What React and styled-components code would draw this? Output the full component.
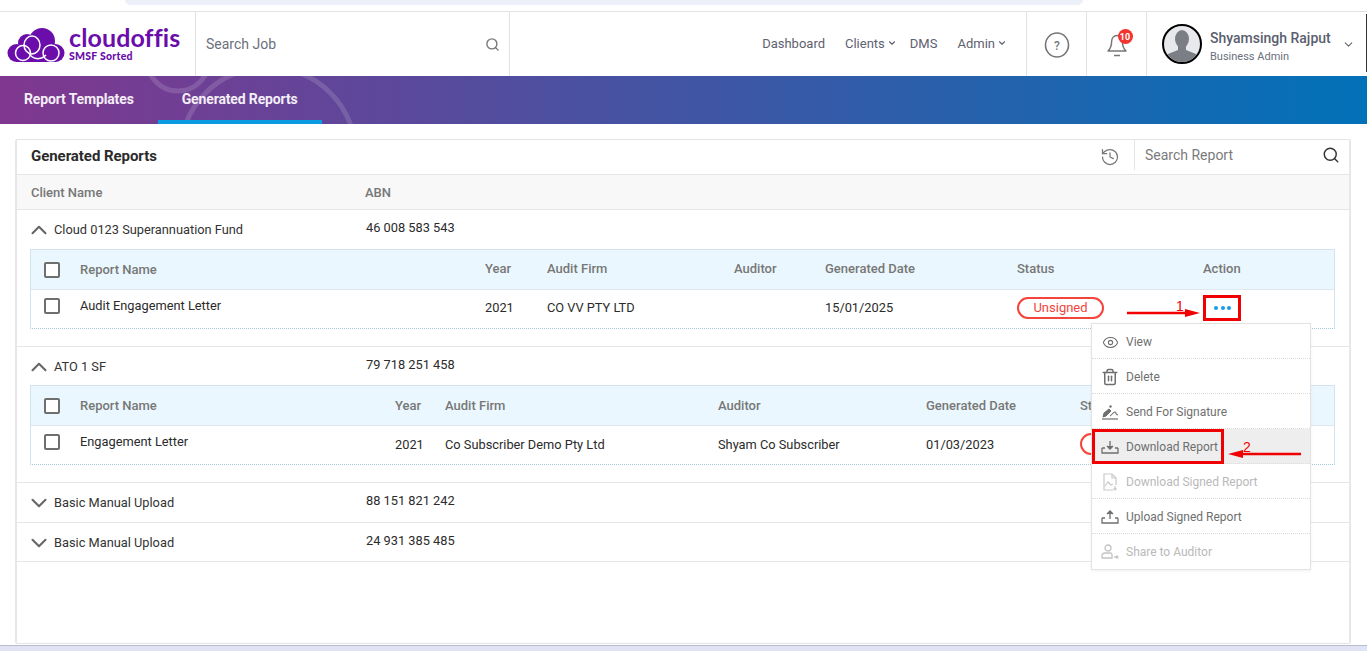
import React from "react";
import styled, { createGlobalStyle } from "styled-components";
import { Search, ChevronDown, ChevronUp, History, Eye, Trash2 } from "lucide-react";

const Global = createGlobalStyle`
  html, body { margin: 0; padding: 0; background: #fff; }
  body { font-family: Roboto, "Liberation Sans", sans-serif; font-size: 13px; color: #222; }
  * { box-sizing: border-box; }
`;

const Page = styled.div`
  position: relative;
  width: 1367px;
  height: 651px;
  overflow: hidden;
  display: flex;
  flex-direction: column;
  background: #fff;
`;
const BrowserStrip = styled.div`
  height: 12px;
  flex: none;
  padding: 0 284px 0 125px;
  border-bottom: 1px solid #e2e2e2;
`;
const BrowserPill = styled.div`
  height: 5px;
  background: #ebf0f9;
  border-radius: 0 0 10px 10px;
`;
const Header = styled.header`
  height: 64px;
  flex: none;
  display: flex;
  align-items: stretch;
  background: #fff;
`;
const LogoCell = styled.div`
  width: 196px;
  flex: none;
  border-right: 1px solid #e2e2e2;
  display: flex;
  align-items: center;
  gap: 4px;
  padding: 1px 0 0 7px;
`;
const LogoText = styled.div`
  display: flex;
  flex-direction: column;
  gap: 3px;
  color: #6a0dab;
  margin-top: -1px;
`;
const LogoName = styled.div`
  font-family: Lato, "Noto Sans", sans-serif;
  font-size: 25px;
  line-height: 21px;
  font-weight: 700;
  letter-spacing: 0.1px;
`;
const LogoSub = styled.div`
  font-family: Lato, sans-serif;
  font-size: 10.5px;
  line-height: 10px;
  font-weight: 900;
  letter-spacing: 0.25px;
`;
const SearchCell = styled.div`
  width: 314px;
  flex: none;
  border-right: 1px solid #e2e2e2;
  display: flex;
  align-items: center;
  justify-content: space-between;
  padding: 0 9px 0 10px;
  font-size: 14px;
  color: #6b6f7c;
`;
const Nav = styled.nav`
  flex: 1;
  display: flex;
  justify-content: flex-end;
  align-items: center;
  padding: 0 19px 0 0;
  margin-top: -2px;
  gap: 20px;
  color: #5d6170;
  font-size: 13px;
`;
const NavItem = styled.span`
  display: inline-flex;
  align-items: center;
  gap: 2px;
  margin-right: ${(p) => (p.$tight ? "-7px" : "0")};
`;
const IconCell = styled.div`
  width: 60px;
  flex: none;
  border-left: 1px solid #e2e2e2;
  display: flex;
  align-items: center;
  justify-content: center;
`;
const BellWrap = styled.div`
  position: relative;
  width: 24px;
  height: 26px;
`;
const Badge = styled.span`
  position: absolute;
  top: -2px;
  left: 13px;
  width: 15px;
  height: 15px;
  border-radius: 50%;
  background: #f2352f;
  color: #fff;
  font-size: 9px;
  font-weight: 700;
  display: flex;
  align-items: center;
  justify-content: center;
`;
const UserCell = styled.div`
  position: relative;
  width: 221px;
  flex: none;
  border-left: 1px solid #e2e2e2;
  display: flex;
  align-items: center;
  padding: 0 0 0 15px;
  &::after {
    content: "";
    position: absolute;
    right: 0;
    top: 2px;
    bottom: 4px;
    width: 1px;
    background: #333;
  }
`;
const UserText = styled.div`
  margin-left: 8px;
  width: 132px;
  display: flex;
  flex-direction: column;
  margin-top: 4px;
`;
const UserName = styled.div`
  font-size: 14px;
  font-weight: 500;
  line-height: 21px;
  color: #5a5e6e;
`;
const UserRole = styled.div`
  font-size: 11px;
  line-height: 15px;
  color: #6b6f7c;
`;
const Banner = styled.div`
  position: relative;
  height: 48px;
  flex: none;
  overflow: hidden;
  display: flex;
  background: linear-gradient(90deg, #80378f 0%, #0272b8 100%);
`;
const BannerRings = styled.svg`
  position: absolute;
  left: 130px;
  top: 0;
`;
const Tab = styled.div`
  position: relative;
  padding: 0 24px;
  height: 48px;
  line-height: 46px;
  color: #f4eef7;
  font-size: 14px;
  font-weight: 700;
  letter-spacing: -0.14px;
  white-space: nowrap;
  border-bottom: 4px solid ${(p) => (p.$active ? "#0b9be3" : "transparent")};
`;
const Main = styled.main`
  flex: 1;
  min-height: 0;
  padding: 15px 16px 1px 15px;
`;
const Card = styled.section`
  height: 505px;
  border: 1px solid #e4e4e4;
  border-left: 2px solid #e6e6ec;
  border-right: 2px solid #e6e6ec;
  border-radius: 2px;
  background: #fff;
`;
const CardHead = styled.div`
  height: 35px;
  border-bottom: 1px solid #e6e6e6;
  display: flex;
  align-items: center;
  padding-left: 14px;
`;
const CardTitle = styled.h2`
  flex: 1;
  margin: -2px 0 0;
  font-size: 15px;
  font-weight: 700;
  letter-spacing: -0.05px;
  color: #2b2b2b;
`;
const ReportSearch = styled.div`
  width: 215px;
  height: 30px;
  margin-left: 14px;
  margin-top: -4px;
  border-left: 1px solid #e6e6e6;
  display: flex;
  align-items: center;
  justify-content: space-between;
  padding: 0 9px 0 10px;
  font-size: 14px;
`;
const Placeholder = styled.span`
  color: #7b7b7b;
`;
const ClientHead = styled.div`
  height: 35px;
  background: #f8f8f8;
  border-bottom: 1px solid #e6e6e6;
  display: grid;
  grid-template-columns: 334px 1fr;
  align-items: center;
  padding: 0 0 0 14px;
  color: #777;
  font-weight: 500;
  font-size: 13px;
`;
const Block = styled.div`
  border-bottom: 1px solid #e6e6e6;
  padding-bottom: ${(p) => p.$pad || 0}px;
`;
const BlockHead = styled.div`
  height: ${(p) => p.$h}px;
  display: grid;
  grid-template-columns: 335px 1fr;
  padding-top: ${(p) => p.$top}px;
  padding-left: 14px;
  font-size: 12.8px;
  color: #2b2b2b;
`;
const ClientName = styled.div`
  display: flex;
  align-items: center;
  height: 20px;
  margin-top: 2px;
  margin-left: -5px;
  gap: 2px;
  color: #333;
  line-height: 20px;
`;
const ChevUp = styled(ChevronUp)`
  flex: none;
`;
const ChevDown = styled(ChevronDown)`
  flex: none;
`;
const Abn = styled.div`
  line-height: 20px;
`;
const SubTable = styled.div`
  margin: 0 14px 0 13px;
  border: 1px solid #d3e4ee;
  border-bottom: 1px dotted #a9c8de;
`;
const SubRow = styled.div`
  display: grid;
  grid-template-columns: ${(p) => p.$cols};
  align-items: center;
  height: ${(p) => (p.$head ? 40 : 38)}px;
  background: ${(p) => (p.$head ? "#ebf7fe" : "#fff")};
  border-bottom: ${(p) => (p.$head ? "1px solid #dde8ef" : "none")};
  color: ${(p) => (p.$head ? "#777" : "#2b2b2b")};
  font-size: ${(p) => (p.$head ? 13 : 12.8)}px;
  font-weight: ${(p) => (p.$head ? 500 : 400)};
  padding-left: 13px;
`;
const Cell = styled.div`
  white-space: nowrap;
  padding-bottom: ${(p) => p.$lift ?? 2}px;
`;
const Checkbox = styled.div`
  width: 16px;
  height: 16px;
  border: 2px solid #6f6f6f;
  border-radius: 2px;
  background: #fff;
`;
const Pill = styled.div`
  width: 87px;
  height: 22px;
  border: 2px solid #f4443c;
  border-radius: 11px;
  color: #f4443c;
  font-size: 13px;
  line-height: 18px;
  text-align: center;
`;
const Dots = styled.div`
  display: flex;
  gap: 2.5px;
  padding-left: 11px;
`;
const Dot = styled.span`
  width: 4px;
  height: 4px;
  border-radius: 50%;
  background: #1a9be8;
`;
const BottomStrip = styled.div`
  height: 6px;
  flex: none;
  background: #dfe3f4;
  border-top: 1px solid #b9bcc9;
`;
const Menu = styled.div`
  position: absolute;
  left: 1091px;
  top: 323px;
  width: 220px;
  height: 247px;
  background: #fff;
  border: 1px solid #e3e3e3;
  box-shadow: 0 1px 3px rgba(0, 0, 0, 0.06);
`;
const MenuItem = styled.div`
  height: 35px;
  display: flex;
  align-items: center;
  gap: 7px;
  padding: ${(p) => (p.$last ? 0 : 2)}px 0 0 9px;
  font-size: 12px;
  color: ${(p) => (p.$off ? "#b9b9b9" : "#6f6f6f")};
  background: ${(p) => (p.$hot ? "#eeeeee" : "#fff")};
  border-bottom: ${(p) => (p.$last ? "none" : "1px dotted #dcdcdc")};
`;
const MenuIcon = styled.span`
  width: 18px;
  height: 18px;
  flex: none;
  display: flex;
  align-items: center;
  justify-content: center;
`;
const Marker = styled.div`
  position: absolute;
  left: ${(p) => p.$x}px;
  top: ${(p) => p.$y}px;
  width: ${(p) => p.$w}px;
  height: ${(p) => p.$h}px;
  border: 3px solid #f00000;
`;
const MarkNumber = styled.span`
  position: absolute;
  left: ${(p) => p.$x}px;
  top: ${(p) => p.$y}px;
  color: #f00000;
  font-family: "Liberation Sans", sans-serif;
  font-size: 14px;
  line-height: 16px;
`;
const ArrowLayer = styled.svg`
  position: absolute;
  left: 0;
  top: 0;
  pointer-events: none;
`;

const COLS1 = "36px 405px 62px 187px 91px 192px 186px 1fr";
const COLS2 = "36px 315px 50px 273px 208px 154px 1fr";

const Logo = () => (
  <svg width="58" height="34" viewBox="0 0 58 34" style={{ flex: "none" }}>
    <g fill="#6a0dab">
      <circle cx="9.500" cy="25" r="9" />
      <circle cx="20" cy="15" r="9" />
      <circle cx="35" cy="13" r="13" />
      <circle cx="48.500" cy="25" r="9" />
      <rect x="9" y="18" width="40" height="16" />
    </g>
    <g fill="none" stroke="#fff" strokeWidth="1.500">
      <circle cx="16" cy="25" r="7.500" />
      <ellipse cx="25" cy="17" rx="8" ry="9" />
      <circle cx="44" cy="25" r="8" />
      <path d="M22 25c3 6 11 8 17 2" />
    </g>
  </svg>
);

const Avatar = () => (
  <svg width="40" height="40" viewBox="0 0 40 40" style={{ flex: "none" }}>
    <circle cx="20" cy="20" r="19" fill="#e8e9ec" stroke="#000" strokeWidth="2" />
    <clipPath id="av"><circle cx="20" cy="20" r="18" /></clipPath>
    <g clipPath="url(#av)" fill="#7b7f85">
      <ellipse cx="20" cy="15" rx="7" ry="9" />
      <path d="M16 22h8v4l10 4 2 10H4l2-10 10-4z" />
    </g>
  </svg>
);

const HelpIcon = () => (
  <svg width="26" height="28" viewBox="0 0 26 28" fill="none" stroke="#777" style={{ marginTop: 2 }}>
    <ellipse cx="13" cy="14" rx="11.500" ry="12" strokeWidth="1.600" />
    <text x="13" y="18.500" fontSize="12" fontWeight="500" textAnchor="middle" fill="#777" stroke="none" fontFamily="Roboto">?</text>
  </svg>
);

const BellIcon = () => (
  <svg width="24" height="26" viewBox="0 0 24 26" fill="none" stroke="#777" strokeWidth="1.500">
    <path d="M3 20c2-2 3.500-3.500 3.500-8.500 0-4.500 2.500-7 5.500-7s5.500 2.500 5.500 7c0 5 1.500 6.500 3.500 8.500z" strokeLinejoin="round" />
    <path d="M9 24.500h6" />
  </svg>
);

const TrayDown = () => (
  <svg width="18" height="14" viewBox="0 0 18 14" fill="none" stroke="#6f6f6f" strokeWidth="1.300">
    <path d="M1 8v5h16V8M1 8h3M14 8h3" />
    <path d="M9 1v7" /><path d="M6 6l3 3 3-3" fill="#6f6f6f" />
  </svg>
);
const TrayUp = () => (
  <svg width="18" height="14" viewBox="0 0 18 14" fill="none" stroke="#6f6f6f" strokeWidth="1.300">
    <path d="M1 8v5h16V8M1 8h3M14 8h3" />
    <path d="M9 9V2" /><path d="M6 4l3-3 3 3" fill="#6f6f6f" />
  </svg>
);
const SignIcon = () => (
  <svg width="18" height="16" viewBox="0 0 18 16" fill="none" stroke="#6f6f6f">
    <path d="M1 15h16" strokeWidth="1.200" />
    <path d="M2 13l1-4 5-4 2 2-5 5z" fill="#6f6f6f" />
    <circle cx="9.500" cy="2.500" r="1.200" fill="#6f6f6f" stroke="none" />
    <path d="M9 12c2-1 3-4 5-4s-1 2 3 3" strokeWidth="1.100" />
  </svg>
);
const SignedFile = () => (
  <svg width="16" height="18" viewBox="0 0 16 18" fill="none" stroke="#c9c9c9" strokeWidth="1.200">
    <path d="M11 17H2V1h8l4 4v7" />
    <path d="M10 1v4h4" />
    <path d="M3 13l3-4 3 3 2-1" />
    <path d="M13 13v4M11.500 15.500l1.500 1.500 1.500-1.500" />
  </svg>
);
const ShareIcon = () => (
  <svg width="18" height="16" viewBox="0 0 18 16" fill="none" stroke="#c4c4c4" strokeWidth="1.300">
    <circle cx="7" cy="4" r="3" />
    <path d="M1 14v-2c0-2 1-3 3-3h5c1.500 0 2 1 2 2v3z" />
    <path d="M13 13h4M15.500 11.500L17 13l-1.500 1.500" />
  </svg>
);

const menu = [
  { label: "View", icon: <Eye size={17} color="#6f6f6f" strokeWidth={1.5} /> },
  { label: "Delete", icon: <Trash2 size={18} color="#6f6f6f" strokeWidth={2} /> },
  { label: "Send For Signature", icon: <SignIcon /> },
  { label: "Download Report", icon: <TrayDown />, hot: true },
  { label: "Download Signed Report", icon: <SignedFile />, off: true },
  { label: "Upload Signed Report", icon: <TrayUp /> },
  { label: "Share to Auditor", icon: <ShareIcon />, off: true, last: true },
];

const Chev = ({ up }) =>
  up ? <ChevUp size={26} color="#666" strokeWidth={1.9} /> : <ChevDown size={26} color="#666" strokeWidth={1.9} />;

export default function App() {
  return (
    <Page>
      <Global />
      <BrowserStrip><BrowserPill /></BrowserStrip>
      <Header>
        <LogoCell>
          <Logo />
          <LogoText>
            <LogoName>cloudoffis</LogoName>
            <LogoSub>SMSF Sorted</LogoSub>
          </LogoText>
        </LogoCell>
        <SearchCell>
          Search Job
          <Search size={15} color="#777" strokeWidth={2.2} />
        </SearchCell>
        <Nav>
          <NavItem>Dashboard</NavItem>
          <NavItem $tight>Clients<ChevronDown size={10} strokeWidth={2.6} /></NavItem>
          <NavItem>DMS</NavItem>
          <NavItem>Admin<ChevronDown size={10} strokeWidth={2.6} /></NavItem>
        </Nav>
        <IconCell><HelpIcon /></IconCell>
        <IconCell>
          <BellWrap>
            <BellIcon />
            <Badge>10</Badge>
          </BellWrap>
        </IconCell>
        <UserCell>
          <Avatar />
          <UserText>
            <UserName>Shyamsingh Rajput</UserName>
            <UserRole>Business Admin</UserRole>
          </UserText>
          <ChevronDown size={13} color="#666" />
        </UserCell>
      </Header>
      <Banner>
        <BannerRings width="260" height="48" viewBox="0 0 260 48" fill="none" stroke="rgba(255,255,255,0.14)" strokeWidth="5">
          <circle cx="48" cy="-16" r="31" />
          <circle cx="138" cy="79" r="88" />
        </BannerRings>
        <Tab>Report Templates</Tab>
        <Tab $active>Generated Reports</Tab>
      </Banner>
      <Main>
        <Card>
          <CardHead>
            <CardTitle>Generated Reports</CardTitle>
            <History size={20} color="#777" strokeWidth={1.5} />
            <ReportSearch>
              <Placeholder>Search Report</Placeholder>
              <Search size={18} color="#333" strokeWidth={1.9} />
            </ReportSearch>
          </CardHead>
          <ClientHead>
            <span>Client Name</span>
            <span>ABN</span>
          </ClientHead>
          <Block $pad={17}>
            <BlockHead $h={39} $top={8}>
              <ClientName><Chev up />Cloud 0123 Superannuation Fund</ClientName>
              <Abn>46 008 583 543</Abn>
            </BlockHead>
            <SubTable>
              <SubRow $head $cols={COLS1}>
                <Checkbox />
                <Cell $lift={0}>Report Name</Cell>
                <Cell>Year</Cell><Cell>Audit Firm</Cell><Cell>Auditor</Cell>
                <Cell>Generated Date</Cell><Cell>Status</Cell><Cell>Action</Cell>
              </SubRow>
              <SubRow $cols={COLS1}>
                <Cell $lift={7}><Checkbox /></Cell>
                <Cell $lift={7}>Audit Engagement Letter</Cell>
                <Cell $lift={3}>2021</Cell><Cell $lift={3}>CO VV PTY LTD</Cell><Cell />
                <Cell $lift={3}>15/01/2025</Cell>
                <Cell><Pill>Unsigned</Pill></Cell>
                <Cell $lift={3}><Dots><Dot /><Dot /><Dot /></Dots></Cell>
              </SubRow>
            </SubTable>
          </Block>
          <Block $pad={17}>
            <BlockHead $h={38} $top={8}>
              <ClientName><Chev up />ATO 1 SF</ClientName>
              <Abn>79 718 251 458</Abn>
            </BlockHead>
            <SubTable>
              <SubRow $head $cols={COLS2}>
                <Checkbox />
                <Cell $lift={0}>Report Name</Cell>
                <Cell $lift={0}>Year</Cell><Cell $lift={0}>Audit Firm</Cell><Cell $lift={0}>Auditor</Cell>
                <Cell $lift={0}>Generated Date</Cell><Cell $lift={0}>Status</Cell>
              </SubRow>
              <SubRow $cols={COLS2}>
                <Cell $lift={7}><Checkbox /></Cell>
                <Cell $lift={7}>Engagement Letter</Cell>
                <Cell>2021</Cell><Cell>Co Subscriber Demo Pty Ltd</Cell><Cell>Shyam Co Subscriber</Cell>
                <Cell>01/03/2023</Cell>
                <Cell $lift={2}><Pill /></Cell>
              </SubRow>
            </SubTable>
          </Block>
          <Block>
            <BlockHead $h={39} $top={8}>
              <ClientName><Chev />Basic Manual Upload</ClientName>
              <Abn>88 151 821 242</Abn>
            </BlockHead>
          </Block>
          <Block>
            <BlockHead $h={38} $top={8}>
              <ClientName><Chev />Basic Manual Upload</ClientName>
              <Abn>24 931 385 485</Abn>
            </BlockHead>
          </Block>
        </Card>
      </Main>
      <BottomStrip />
      <Menu>
        {menu.map((m) => (
          <MenuItem key={m.label} $off={m.off} $hot={m.hot} $last={m.last}>
            <MenuIcon>{m.icon}</MenuIcon>
            {m.label}
          </MenuItem>
        ))}
      </Menu>
      <Marker $x={1203} $y={295} $w={38} $h={26} />
      <Marker $x={1092} $y={429} $w={132} $h={35} />
      <ArrowLayer width="1367" height="651" viewBox="0 0 1367 651">
        <path d="M1127 313h62" stroke="#f00000" strokeWidth="2.500" />
        <path d="M1185 309l15 4-15 4z" fill="#f00000" />
        <path d="M1240 454h61" stroke="#f00000" strokeWidth="2.500" />
        <path d="M1243 450l-15 4 15 4z" fill="#f00000" />
      </ArrowLayer>
      <MarkNumber $x={1176} $y={298}>1</MarkNumber>
      <MarkNumber $x={1243} $y={439}>2</MarkNumber>
    </Page>
  );
}
